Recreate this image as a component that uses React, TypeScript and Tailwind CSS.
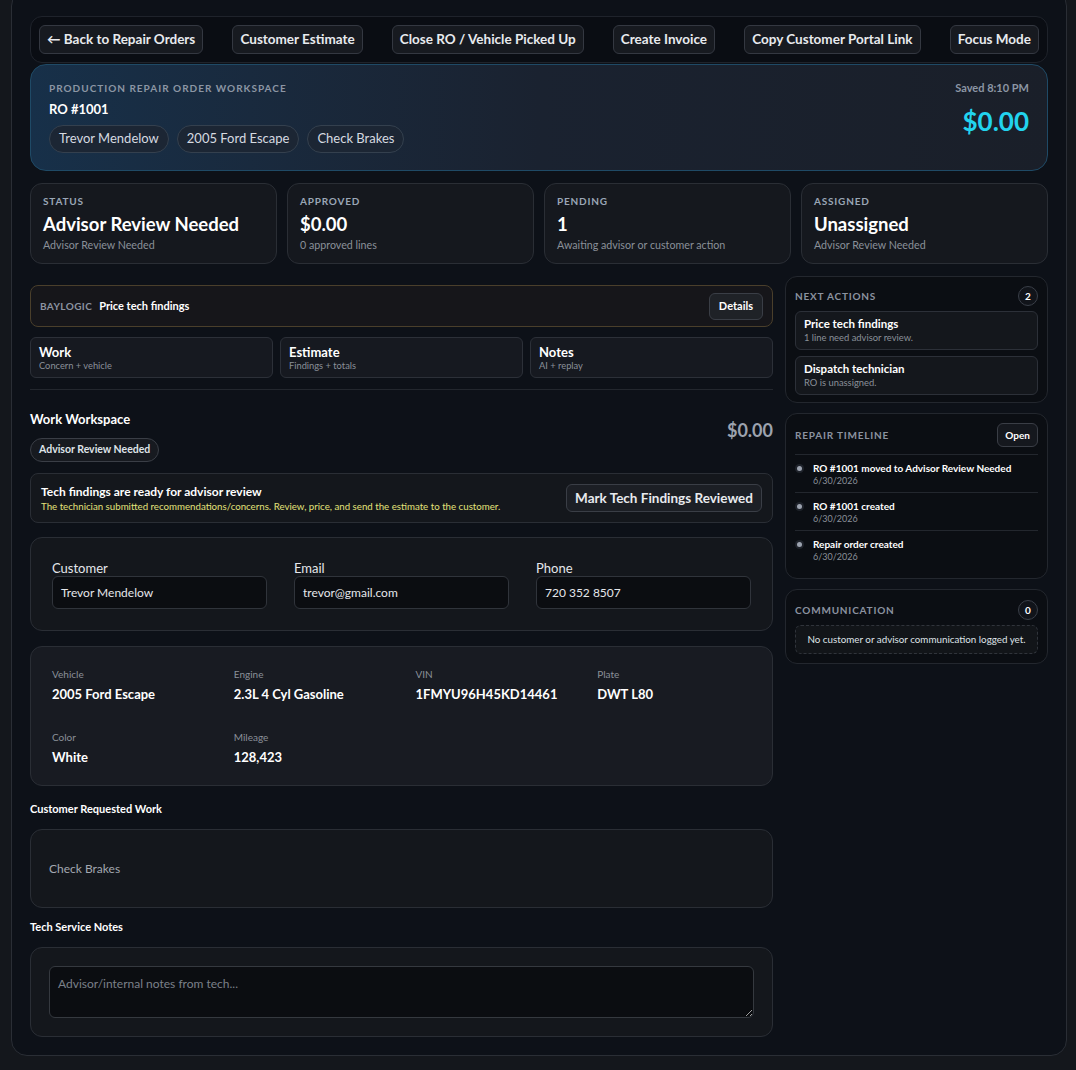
const toolbar = [
  "← Back to Repair Orders",
  "Customer Estimate",
  "Close RO / Vehicle Picked Up",
  "Create Invoice",
  "Copy Customer Portal Link",
  "Focus Mode",
];

const stats = [
  { label: "Status", value: "Advisor Review Needed", sub: "Advisor Review Needed" },
  { label: "Approved", value: "$0.00", sub: "0 approved lines" },
  { label: "Pending", value: "1", sub: "Awaiting advisor or customer action" },
  { label: "Assigned", value: "Unassigned", sub: "Advisor Review Needed" },
];

const tabs = [
  { title: "Work", sub: "Concern + vehicle" },
  { title: "Estimate", sub: "Findings + totals" },
  { title: "Notes", sub: "AI + replay" },
];

const vehicle = [
  { label: "Vehicle", value: "2005 Ford Escape" },
  { label: "Engine", value: "2.3L 4 Cyl Gasoline" },
  { label: "VIN", value: "1FMYU96H45KD14461" },
  { label: "Plate", value: "DWT L80" },
  { label: "Color", value: "White" },
  { label: "Mileage", value: "128,423" },
];

const timeline = [
  "RO #1001 moved to Advisor Review Needed",
  "RO #1001 created",
  "Repair order created",
];

function SideTitle(props: { children: React.ReactNode }) {
  return (
    <div className="text-[10px] font-bold uppercase tracking-[0.08em] text-[#8b93a0]">
      {props.children}
    </div>
  );
}

function CountBadge(props: { n: number }) {
  return (
    <div className="flex h-[20px] w-[20px] items-center justify-center rounded-full border border-[#3a3f48] bg-[#11141a] text-[10px] font-bold text-white">
      {props.n}
    </div>
  );
}

export default function App() {
  return (
    <div
      className="min-h-[1070px] bg-[#14171c] pb-[14px] text-white"
      style={{ fontFamily: 'Lato, "Noto Sans", Arial, sans-serif' }}
    >
      <div className="ml-[11px] mr-[9px] mt-[-10px] rounded-2xl border border-[#2a2e35] bg-[#0d1118] px-[18px] pb-[18px] pt-[25px]">
        {/* toolbar */}
        <div className="flex items-center justify-between rounded-xl border border-[#1f232b] bg-[#0a0d13] px-[8px] py-[8px]">
          {toolbar.map((t) => (
            <button
              key={t}
              className="h-[29px] rounded-md border border-[#343841] bg-[#171a20] px-[7px] text-[13.5px] font-bold text-[#e8eaee]"
            >
              {t}
            </button>
          ))}
        </div>

        {/* hero */}
        <div className="mt-[1px] flex justify-between rounded-2xl border border-[#1f4a66] bg-gradient-to-r from-[#173049] via-[#1a2230] to-[#1a1f29] px-[18px] pb-[17px] pt-[17px]">
          <div>
            <div className="text-[10px] font-bold uppercase leading-[12px] tracking-[0.1em] text-[#8c96a4]">
              Production Repair Order Workspace
            </div>
            <div className="mt-[6px] text-[13px] font-bold leading-[18px]">RO #1001</div>
            <div className="mt-[7px] flex gap-[8px]">
              {["Trevor Mendelow", "2005 Ford Escape", "Check Brakes"].map((p) => (
                <span
                  key={p}
                  className="flex h-[28px] items-center rounded-full border border-[#34404e] bg-[#1c2634] px-[9px] text-[13px] text-[#d6dae0]"
                >
                  {p}
                </span>
              ))}
            </div>
          </div>
          <div className="flex flex-col items-end">
            <div className="text-[11px] font-bold leading-[12px] text-[#8c96a4]">Saved 8:10 PM</div>
            <div className="mt-[10px] text-[26px] font-bold leading-[34px] text-[#22d3ee]">$0.00</div>
          </div>
        </div>

        {/* stats */}
        <div className="mt-[12px] grid grid-cols-4 gap-[10px]">
          {stats.map((s) => (
            <div
              key={s.label}
              className="h-[81px] rounded-xl border border-[#2a2e35] bg-[#15181e] px-[12px] pt-[11px]"
            >
              <div className="text-[10px] font-bold uppercase leading-[13px] tracking-[0.08em] text-[#9aa6b6]">
                {s.label}
              </div>
              <div className="mt-[3px] text-[18.5px] font-bold leading-[26px]">{s.value}</div>
              <div className="mt-[1px] text-[10.7px] leading-[14px] text-[#8a9099]">{s.sub}</div>
            </div>
          ))}
        </div>

        {/* main */}
        <div className="mt-[12px] grid grid-cols-[743px_1fr] gap-[12px]">
          <div className="pt-[9px]">
            <div className="flex h-[42px] items-center justify-between rounded-lg border border-[#4a3f2b] bg-[#16161a] pl-[9px] pr-[9px]">
              <div className="flex items-center gap-[7px]">
                <span className="text-[10px] font-bold tracking-[0.04em] text-[#8b93a0]">BAYLOGIC</span>
                <span className="text-[11px] font-bold text-white">Price tech findings</span>
              </div>
              <button className="h-[27px] rounded-md border border-[#3a3e46] bg-[#1f2227] px-[9px] text-[11px] font-bold text-white">
                Details
              </button>
            </div>

            <div className="mt-[10px] grid grid-cols-3 gap-[7px]">
              {tabs.map((t) => (
                <div
                  key={t.title}
                  className="h-[41px] rounded-md border border-[#2c3038] bg-[#161920] px-[8px] pt-[6px]"
                >
                  <div className="text-[13px] font-bold leading-[16px]">{t.title}</div>
                  <div className="text-[9.3px] leading-[11px] text-[#8a9099]">{t.sub}</div>
                </div>
              ))}
            </div>

            <div className="mt-[11px] border-t border-[#23272e]" />

            <div className="mt-[20px] flex justify-between">
              <div>
                <div className="text-[13px] font-bold leading-[18px]">Work Workspace</div>
                <div className="mt-[10px] inline-flex h-[24px] items-center rounded-full border border-[#3a3e46] bg-[#171a20] px-[8px] text-[10.5px] font-bold text-[#dfe3e8]">
                  Advisor Review Needed
                </div>
              </div>
              <div className="mt-[7px] text-[18px] font-bold text-[#9ca3af]">$0.00</div>
            </div>

            <div className="mt-[11px] flex h-[50px] items-center justify-between rounded-lg border border-[#2a2e35] bg-[#14171c] pl-[10px] pr-[10px]">
              <div>
                <div className="text-[12px] font-bold leading-[16px]">
                  Tech findings are ready for advisor review
                </div>
                <div className="text-[9.7px] leading-[13px] text-[#e3e27a]">
                  The technician submitted recommendations/concerns. Review, price, and send the estimate to the customer.
                </div>
              </div>
              <button className="h-[28px] rounded-md border border-[#3a3e46] bg-[#1c1f25] px-[8px] text-[13.5px] font-bold text-[#e8eaee]">
                Mark Tech Findings Reviewed
              </button>
            </div>

            <div className="mt-[14px] grid grid-cols-3 gap-[27px] rounded-xl border border-[#2a2e35] bg-[#14171c] px-[21px] pb-[21px] pt-[22px]">
              {[
                { label: "Customer", value: "Trevor Mendelow" },
                { label: "Email", value: "trevor@gmail.com" },
                { label: "Phone", value: "720 352 8507" },
              ].map((f) => (
                <div key={f.label}>
                  <div className="text-[13px] leading-[16px] text-[#e5e7eb]">{f.label}</div>
                  <div className="flex h-[33px] items-center rounded-md border border-[#30343b] bg-[#0b0d11] px-[8px] text-[12px] text-[#e5e7eb]">
                    {f.value}
                  </div>
                </div>
              ))}
            </div>

            <div className="mt-[15px] grid h-[140px] grid-cols-4 content-start gap-x-[28px] gap-y-[27px] rounded-xl border border-[#2a2e35] bg-[#181b22] px-[21px] pt-[20px]">
              {vehicle.map((v) => (
                <div key={v.label}>
                  <div className="text-[10px] leading-[14px] text-[#8a9099]">{v.label}</div>
                  <div className="mt-[4px] text-[13px] font-bold leading-[18px]">{v.value}</div>
                </div>
              ))}
            </div>

            <div className="mt-[15px] text-[11px] font-bold leading-[15px]">Customer Requested Work</div>
            <div className="mt-[13px] flex h-[79px] items-center rounded-xl border border-[#2a2e35] bg-[#14171c] px-[18px] text-[12px] text-[#a3a8b0]">
              Check Brakes
            </div>

            <div className="mt-[11px] text-[11px] font-bold leading-[15px]">Tech Service Notes</div>
            <div className="mt-[13px] rounded-xl border border-[#2a2e35] bg-[#14171c] px-[18px] py-[18px]">
              <textarea
                className="block h-[52px] w-full resize-y rounded-md border border-[#35393f] bg-[#0b0d11] px-[8px] py-[8px] text-[12px] text-white placeholder:text-[#7b8089] outline-none"
                placeholder="Advisor/internal notes from tech..."
              />
            </div>
          </div>

          {/* sidebar */}
          <div className="flex flex-col gap-[10px]">
            <div className="rounded-xl border border-[#23272e] bg-[#0b0e13] px-[9px] pb-[7px] pt-[9px]">
              <div className="flex items-center justify-between">
                <SideTitle>Next Actions</SideTitle>
                <CountBadge n={2} />
              </div>
              <div className="mt-[5px] flex flex-col gap-[6px]">
                {[
                  { t: "Price tech findings", s: "1 line need advisor review." },
                  { t: "Dispatch technician", s: "RO is unassigned." },
                ].map((a) => (
                  <div key={a.t} className="h-[39px] rounded-md border border-[#2c3038] bg-[#14171c] px-[8px] pt-[5px]">
                    <div className="text-[11.5px] font-bold leading-[14px]">{a.t}</div>
                    <div className="text-[9.4px] leading-[13px] text-[#8a9099]">{a.s}</div>
                  </div>
                ))}
              </div>
            </div>

            <div className="rounded-xl border border-[#23272e] bg-[#0b0e13] px-[9px] pb-[10px] pt-[9px]">
              <div className="flex items-center justify-between pb-[7px]">
                <SideTitle>Repair Timeline</SideTitle>
                <button className="h-[24px] rounded-md border border-[#3a3e46] bg-[#15181e] px-[7px] text-[10px] font-bold text-white">
                  Open
                </button>
              </div>
              {timeline.map((t) => (
                <div key={t} className="flex gap-[9px] border-t border-[#23272e] pb-[5px] pt-[6px]">
                  <div className="mt-[3px] flex h-[9px] w-[9px] items-center justify-center rounded-full bg-[#1e222a]">
                    <div className="h-[5px] w-[5px] rounded-full bg-[#9ca3af]" />
                  </div>
                  <div>
                    <div className="text-[10px] font-bold leading-[14px]">{t}</div>
                    <div className="text-[9px] leading-[12px] text-[#8a9099]">6/30/2026</div>
                  </div>
                </div>
              ))}
            </div>

            <div className="rounded-xl border border-[#23272e] bg-[#0b0e13] px-[9px] pb-[9px] pt-[10px]">
              <div className="flex items-center justify-between">
                <SideTitle>Communication</SideTitle>
                <CountBadge n={0} />
              </div>
              <div className="mt-[5px] flex h-[29px] items-center justify-center rounded-md border border-dashed border-[#30343b] bg-[#121519] text-[9.8px] text-[#dfe3e8]">
                No customer or advisor communication logged yet.
              </div>
            </div>
          </div>
        </div>
      </div>
    </div>
  );
}
